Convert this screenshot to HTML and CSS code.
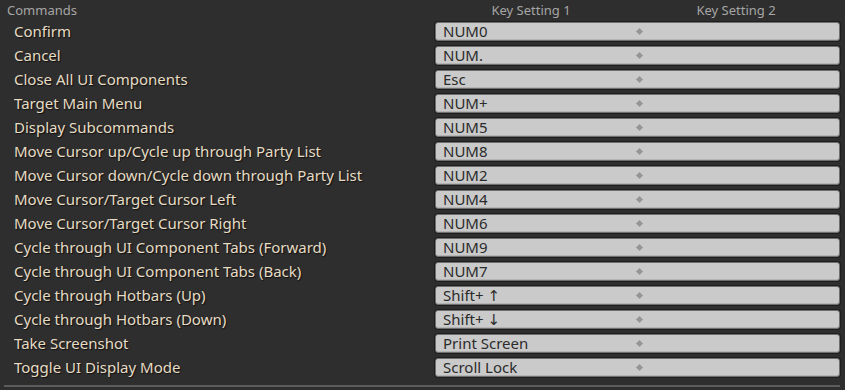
FILE: index.html
```html
<!DOCTYPE html>
<html lang="en">
<head>
    <meta charset="UTF-8">
    <title>Key Bindings</title>
    <link rel="stylesheet" href="styles.css">
</head>
<body>
    <div class="panel">
        <div class="head">
            <div class="head-cmd">Commands</div>
            <div class="head-key">Key Setting 1</div>
            <div class="head-key">Key Setting 2</div>
        </div>

        <div class="row"><div class="cmd">Confirm</div><div class="keys"><span class="k1">NUM0</span><span class="sep"></span><span class="k2"></span></div></div>
        <div class="row"><div class="cmd">Cancel</div><div class="keys"><span class="k1">NUM.</span><span class="sep"></span><span class="k2"></span></div></div>
        <div class="row"><div class="cmd">Close All UI Components</div><div class="keys"><span class="k1">Esc</span><span class="sep"></span><span class="k2"></span></div></div>
        <div class="row"><div class="cmd">Target Main Menu</div><div class="keys"><span class="k1">NUM+</span><span class="sep"></span><span class="k2"></span></div></div>
        <div class="row"><div class="cmd">Display Subcommands</div><div class="keys"><span class="k1">NUM5</span><span class="sep"></span><span class="k2"></span></div></div>
        <div class="row"><div class="cmd">Move Cursor up/Cycle up through Party List</div><div class="keys"><span class="k1">NUM8</span><span class="sep"></span><span class="k2"></span></div></div>
        <div class="row"><div class="cmd">Move Cursor down/Cycle down through Party List</div><div class="keys"><span class="k1">NUM2</span><span class="sep"></span><span class="k2"></span></div></div>
        <div class="row"><div class="cmd">Move Cursor/Target Cursor Left</div><div class="keys"><span class="k1">NUM4</span><span class="sep"></span><span class="k2"></span></div></div>
        <div class="row"><div class="cmd">Move Cursor/Target Cursor Right</div><div class="keys"><span class="k1">NUM6</span><span class="sep"></span><span class="k2"></span></div></div>
        <div class="row"><div class="cmd">Cycle through UI Component Tabs (Forward)</div><div class="keys"><span class="k1">NUM9</span><span class="sep"></span><span class="k2"></span></div></div>
        <div class="row"><div class="cmd">Cycle through UI Component Tabs (Back)</div><div class="keys"><span class="k1">NUM7</span><span class="sep"></span><span class="k2"></span></div></div>
        <div class="row"><div class="cmd">Cycle through Hotbars (Up)</div><div class="keys"><span class="k1">Shift+ ↑</span><span class="sep"></span><span class="k2"></span></div></div>
        <div class="row"><div class="cmd">Cycle through Hotbars (Down)</div><div class="keys"><span class="k1">Shift+ ↓</span><span class="sep"></span><span class="k2"></span></div></div>
        <div class="row"><div class="cmd">Take Screenshot</div><div class="keys"><span class="k1">Print Screen</span><span class="sep"></span><span class="k2"></span></div></div>
        <div class="row"><div class="cmd">Toggle UI Display Mode</div><div class="keys"><span class="k1">Scroll Lock</span><span class="sep"></span><span class="k2"></span></div></div>

        <div class="rule"></div>
    </div>
</body>
</html>
```

FILE: styles.css
```css
body {
    margin: 0;
    background: #2e2e2e;
    font-family: "Noto Sans", "DejaVu Sans", sans-serif;
    overflow: hidden;
}

.panel {
    width: 845px;
    height: 390px;
}

.head {
    display: grid;
    grid-template-columns: 435px 192px 218px;
    height: 20px;
    align-items: center;
    font-size: 13px;
    line-height: 16px;
    color: #a6a6a6;
}
.head-cmd {
    padding-left: 7px;
}
.head-key {
    text-align: center;
}

.row {
    display: grid;
    grid-template-columns: 435px 405px;
    height: 24px;
    align-items: center;
}
.cmd {
    padding-left: 14px;
    padding-bottom: 3px;
    font-size: 15px;
    line-height: 18px;
    color: #e6dcc4;
    text-shadow: 1px 1px 1px #111;
    white-space: nowrap;
}

.keys {
    display: flex;
    align-items: center;
    height: 17px;
    margin-top: -1px;
    border: 1px solid #6e6e6e;
    border-radius: 3px;
    background: #cacaca;
    box-shadow: 0 0 0 1px #1e1e1e, inset 0 -1px 0 #b4b4b4;
    font-size: 15px;
    line-height: 17px;
    color: #2b2b2b;
}
.k1 {
    width: 194px;
    padding-left: 7px;
    padding-bottom: 1px;
    white-space: nowrap;
}
.sep {
    width: 5px;
    height: 5px;
    background: #969696;
    transform: rotate(45deg);
}
.k2 {
    flex: 1;
}

.rule {
    margin: 5px 5px 0 4px;
    height: 2px;
    background: #5c5c5c;
}
```
